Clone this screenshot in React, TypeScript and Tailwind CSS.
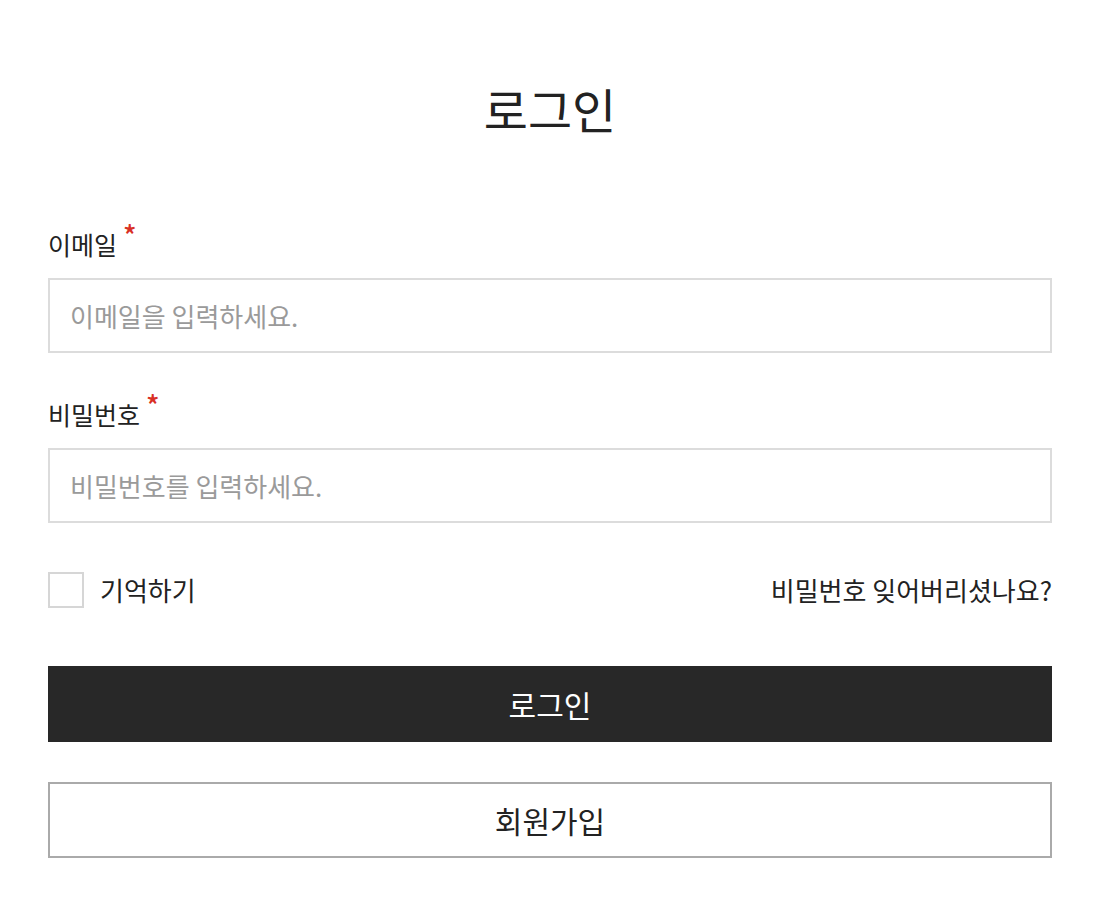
import React, {useState} from "react";

const font = {fontFamily: '"Noto Sans CJK KR", "Noto Sans", sans-serif'};

const Field = ({label, placeholder, type}: {label: string; placeholder: string; type: string}) => {
    return (
        <div className="flex flex-col">
            <label className="flex items-start text-[25px] leading-[36px] text-[#222]">
                {label}
                <span className="ml-[6px] -mt-[6px] text-[28px] font-medium leading-none text-[#d93025]">*</span>
            </label>
            <input
                type={type}
                placeholder={placeholder}
                className="mt-[16px] h-[75px] w-full border-2 border-[#dcdcdc] px-[20px] text-[26px] text-[#222] outline-none placeholder:text-[#9a9a9a]"
            />
        </div>
    );
};

const App = () => {
    const [remember, setRemember] = useState(false);

    return (
        <div className="min-h-screen bg-white pl-[48px] pr-[52px] pt-[78px]" style={font}>
            <h1 className="text-center text-[48px] leading-[60px] text-[#222]">로그인</h1>

            <div className="mt-[88px] flex flex-col gap-[43px]">
                <Field label="이메일" placeholder="이메일을 입력하세요." type="email" />
                <Field label="비밀번호" placeholder="비밀번호를 입력하세요." type="password" />
            </div>

            {/* Remember + forgot */}
            <div className="mt-[49px] flex h-[36px] items-center justify-between leading-[36px]">
                <label className="flex items-center gap-[16px] text-[26px] text-[#222]">
                    <button
                        onClick={() => setRemember(!remember)}
                        className="h-[36px] w-[36px] border-2 border-[#d6d6d6] bg-white"
                    />
                    기억하기
                </label>
                <a className="text-[26px] text-[#222]">비밀번호 잊어버리셨나요?</a>
            </div>

            <button className="mt-[58px] h-[76px] w-full bg-[#282828] text-[30px] text-white">로그인</button>
            <button className="mt-[40px] h-[76px] w-full border-2 border-[#aaaaaa] bg-white text-[30px] text-[#222]">회원가입</button>
        </div>
    );
};

export default App;
